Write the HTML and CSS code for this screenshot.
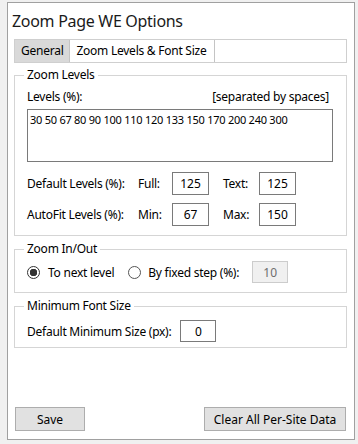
FILE: index.html
```html
<!DOCTYPE html>
<html lang="en">
<head>
  <meta charset="UTF-8" />
  <title>Zoom Page WE Options</title>
  <link rel="stylesheet" href="styles.css">
</head>
<body>
  <div class="window">
    <h1 class="title">Zoom Page WE Options</h1>

    <div class="tabs">
      <span class="tab tab-active">General</span>
      <span class="tab">Zoom Levels &amp; Font Size</span>
    </div>

    <fieldset class="group group-levels">
      <legend>Zoom Levels</legend>
      <div class="levels-head">
        <span>Levels (%):</span>
        <span>[separated by spaces]</span>
      </div>
      <textarea class="levels-input">30 50 67 80 90 100 110 120 133 150 170 200 240 300</textarea>

      <div class="level-grid">
        <label>Default Levels (%):</label>
        <label>Full:</label>
        <input class="num" value="125">
        <label class="sub">Text:</label>
        <input class="num" value="125">

        <label>AutoFit Levels (%):</label>
        <label>Min:</label>
        <input class="num" value="67">
        <label class="sub">Max:</label>
        <input class="num" value="150">
      </div>
    </fieldset>

    <fieldset class="group group-step">
      <legend>Zoom In/Out</legend>
      <div class="radio-row">
        <label class="radio"><input type="radio" name="step" checked>To next level</label>
        <label class="radio"><input type="radio" name="step">By fixed step (%):</label>
        <input class="num num-step" value="10" disabled>
      </div>
    </fieldset>

    <fieldset class="group group-font">
      <legend>Minimum Font Size</legend>
      <div class="font-row">
        <label>Default Minimum Size (px):</label>
        <input class="num" value="0">
      </div>
    </fieldset>

    <div class="actions">
      <button class="save">Save</button>
      <button class="clear">Clear All Per-Site Data</button>
    </div>
  </div>
</body>
</html>
```

FILE: styles.css
```css
body {
  margin: 0;
  background-color: #f0f0f0;
  font-family: "Noto Sans", "Open Sans", sans-serif;
  font-size: 12px;
  letter-spacing: -0.25px;
  color: #000;
}
.window {
  box-sizing: border-box;
  width: 348px;
  height: 438px;
  margin: 2px 0 0 7px;
  padding: 0 7px 8px 6px;
  border: 1px solid #a0a0a0;
  background-color: #fff;
  display: flex;
  flex-direction: column;
}
.title {
  margin: 0 0 0 -2px;
  font-size: 16px;
  font-weight: normal;
  letter-spacing: -0.3px;
  line-height: 36px;
  color: #1a1a1a;
}

/* tab strip */
.tabs {
  display: flex;
  height: 24px;
  box-sizing: border-box;
  border: 1px solid #cfcfcf;
}
.tab {
  line-height: 22px;
  padding: 0 6px;
  border-right: 1px solid #c4c4c4;
}
.tab + .tab {
  padding-right: 8px;
}
.tab-active {
  background-color: #d9d9d9;
}

/* groups */
.group {
  margin: 4px 0 0;
  padding: 0 13px 9px 12px;
  border: 1px solid #d5d5d5;
  min-width: 0;
}
.group legend {
  padding: 0 3px;
  margin-left: -3px;
  line-height: 16px;
}
.group-step, .group-font {
  margin-top: 5px;
}
.group-font {
  padding-bottom: 5px;
}

.levels-head {
  display: flex;
  justify-content: space-between;
  margin-top: 6px;
  padding-right: 4px;
  line-height: 16px;
}
.levels-input {
  display: block;
  box-sizing: border-box;
  width: 100%;
  height: 53px;
  margin-top: 4px;
  padding: 2px 2px;
  border: 1px solid #7a7a7a;
  border-radius: 0;
  resize: none;
  font: inherit;
  font-size: 11px;
  letter-spacing: -0.25px;
  color: #000;
}
.level-grid {
  display: grid;
  grid-template-columns: 111px 34px 37px 50px 37px;
  grid-auto-rows: 23px;
  row-gap: 8px;
  margin-top: 10px;
  align-items: center;
}
.level-grid .sub {
  padding-left: 14px;
}

.num {
  box-sizing: border-box;
  width: 37px;
  height: 23px;
  margin: 0;
  padding: 0;
  border: 1px solid #7a7a7a;
  border-radius: 0;
  font: inherit;
  color: #000;
  text-align: center;
}
.num:disabled {
  background-color: #f0f0f0;
  border-color: #cccccc;
  color: #6d6d6d;
}

/* radios */
.radio-row {
  display: flex;
  align-items: center;
  height: 22px;
  margin-top: 4px;
}
.radio {
  display: flex;
  align-items: center;
}
.radio input {
  appearance: none;
  box-sizing: border-box;
  width: 13px;
  height: 13px;
  margin: 0 8px 0 0;
  border: 1px solid #333;
  border-radius: 50%;
  background-color: #fff;
}
.radio input:checked {
  background: radial-gradient(circle, #333 0 3.5px, #fff 4px);
}
.radio input:not(:checked) {
  border-color: #555;
  margin-right: 7px;
}
.radio + .radio {
  margin-left: 14px;
}
.num-step {
  height: 22px;
  width: 36px;
  margin-left: 13px;
}

.font-row {
  display: flex;
  align-items: center;
  margin-top: 6px;
}
.font-row .num {
  height: 22px;
  width: 36px;
  margin-left: 9px;
}

/* bottom buttons */
.actions {
  margin-top: auto;
  display: flex;
  justify-content: space-between;
  padding: 0 1px;
}
button {
  height: 24px;
  padding: 0;
  border: 1px solid #adadad;
  border-radius: 0;
  background-color: #e1e1e1;
  font: inherit;
  color: #000;
}
.save {
  width: 70px;
}
.clear {
  width: 142px;
}
```
